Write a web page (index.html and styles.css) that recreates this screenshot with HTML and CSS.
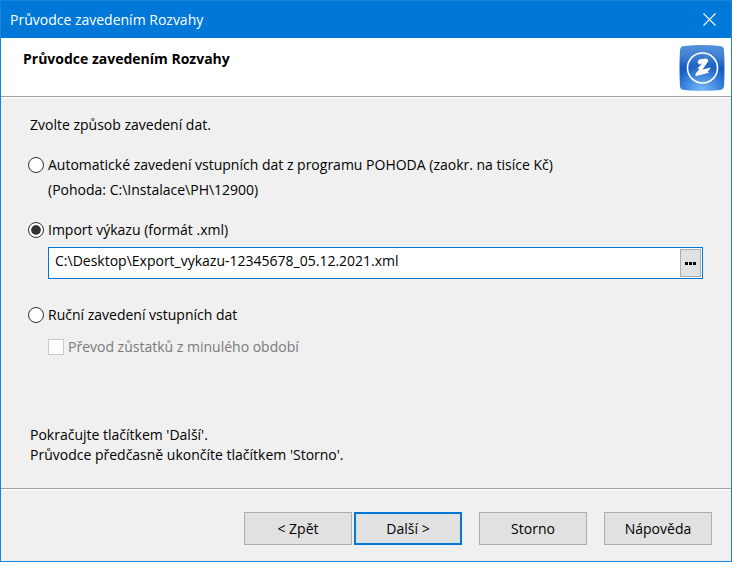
FILE: index.html
```html
<!DOCTYPE html>
<html lang="cs">
<head>
  <meta charset="UTF-8" />
  <meta name="viewport" content="width=device-width, initial-scale=1" />
  <title>Průvodce zavedením Rozvahy</title>
  <link rel="stylesheet" href="styles.css">
</head>
<body>
  <form class="window">
    <div class="titlebar">
      <span>Průvodce zavedením Rozvahy</span>
      <button type="button" class="close" aria-label="Zavřít">
        <svg width="13" height="13" viewBox="0 0 13 13"><path d="M0.5 0.5L12.5 12.5M12.5 0.5L0.5 12.5" stroke="#fff" stroke-width="1.1" /></svg>
      </button>
    </div>

    <header class="header">
      <h1>Průvodce zavedením Rozvahy</h1>
      <svg class="logo" width="46" height="46" viewBox="0 0 46 46">
        <defs>
          <linearGradient id="tile" x1="0" y1="0" x2="0" y2="1">
            <stop offset="0" stop-color="#5590da" />
            <stop offset="0.25" stop-color="#4080d2" />
            <stop offset="0.5" stop-color="#165cc0" />
            <stop offset="0.75" stop-color="#1764cd" />
            <stop offset="1" stop-color="#226fd6" />
          </linearGradient>
          <radialGradient id="glow" cx="0.5" cy="1" r="0.6">
            <stop offset="0" stop-color="#8ccbff" stop-opacity="0.8" />
            <stop offset="1" stop-color="#8ccbff" stop-opacity="0" />
          </radialGradient>
        </defs>
        <path d="M5 1Q23 -1 41 1Q45 1.500 45 5Q46 23 45 41Q44.500 44.500 41 45Q23 46 5 45Q1 44.500 1 41Q0 23 1 5Q1.500 1 5 1Z" fill="url(#tile)" />
        <path d="M5 1Q23 -1 41 1Q45 1.500 45 5Q46 23 45 41Q44.500 44.500 41 45Q23 46 5 45Q1 44.500 1 41Q0 23 1 5Q1.500 1 5 1Z" fill="url(#glow)" />
        <circle cx="23.500" cy="23" r="15" fill="none" stroke="#fff" stroke-width="1.600" />
        <path d="M18.500 17L20 14.500L27 13.500Q29.500 14 29 16.500L23.500 24.500L32 22.500L28.500 27L30.500 27.500L17.500 31Q15.500 30.500 17 28L20.500 24L18.500 23.500L23 18.500L20 19.500Z" fill="#fff" />
      </svg>
    </header>

    <main class="content">
      <p class="intro">Zvolte způsob zavedení dat.</p>

      <div class="option">
        <input type="radio" name="source" id="auto">
        <label for="auto">Automatické zavedení vstupních dat z programu POHODA (zaokr. na tisíce Kč)</label>
      </div>
      <p class="detail">(Pohoda: C:\Instalace\PH\12900)</p>

      <div class="option">
        <input type="radio" name="source" id="import" checked>
        <label for="import">Import výkazu (formát .xml)</label>
      </div>
      <div class="file">
        <input type="text" value="C:\Desktop\Export_vykazu-12345678_05.12.2021.xml" aria-label="Soubor výkazu">
        <button type="button" class="browse" aria-label="Procházet">
          <svg width="11" height="3" viewBox="0 0 11 3"><path d="M0 0h3v3h-3zM4 0h3v3h-3zM8 0h3v3h-3z" /></svg>
        </button>
      </div>

      <div class="option">
        <input type="radio" name="source" id="manual">
        <label for="manual">Ruční zavedení vstupních dat</label>
      </div>
      <div class="option sub">
        <input type="checkbox" id="transfer" disabled>
        <label for="transfer">Převod zůstatků z minulého období</label>
      </div>

      <p class="hint">Pokračujte tlačítkem 'Další'.<br>Průvodce předčasně ukončíte tlačítkem 'Storno'.</p>
    </main>

    <footer class="footer">
      <div class="steps">
        <button type="button" class="btn">&lt; Zpět</button>
        <button type="button" class="btn primary">Další &gt;</button>
      </div>
      <button type="button" class="btn">Storno</button>
      <button type="button" class="btn">Nápověda</button>
    </footer>
  </form>
</body>
</html>
```

FILE: styles.css
```css
* {
  box-sizing: border-box;
}
body {
  margin: 0;
  font-family: "Segoe UI", "Open Sans", "Noto Sans", sans-serif;
  font-size: 14px;
  line-height: 20px;
  color: #000;
}
button,
input {
  font: inherit;
  color: inherit;
}
h1,
p {
  margin: 0;
}
svg {
  display: block;
}
.window {
  display: flex;
  flex-direction: column;
  min-height: 100vh;
  background: #f0f0f0;
  border: 1px solid #1883d7;
}
.titlebar {
  display: flex;
  justify-content: space-between;
  align-items: center;
  height: 37px;
  padding-left: 9px;
  background: #0078d7;
  color: #fff;
}
.close {
  padding: 12px 15px;
  border: none;
  background: none;
}
.header {
  display: flex;
  justify-content: space-between;
  align-items: flex-start;
  padding: 7px 6px 5px 22px;
  background: #fff;
  border-bottom: 1px solid #a0a0a0;
}
.header h1 {
  padding-top: 4px;
  font-size: 14px;
  font-weight: bold;
}
.content {
  flex: 1;
  padding: 17px 28px 23px 27px;
  border-top: 1px solid #fff;
  border-bottom: 1px solid #a0a0a0;
}
.intro {
  margin-bottom: 20px;
  padding-left: 2px;
}
.option {
  display: flex;
  align-items: center;
  gap: 4px;
}
.option input {
  appearance: none;
  flex: none;
  width: 16px;
  height: 16px;
  margin: 0;
  background: #fff;
  border: 1px solid #333;
}
.option input[type="radio"] {
  border-radius: 50%;
}
.option input[type="radio"]:checked {
  background: #333;
  background-clip: content-box;
  padding: 2px;
  box-shadow: inset 0 0 0 2px #fff;
}
.option input:disabled {
  border-color: #ccc;
}
.option input:disabled + label {
  color: #7a7a7a;
}
.detail {
  margin: 5px 0 20px;
  padding-left: 20px;
}
.file {
  display: flex;
  height: 32px;
  margin: 7px 0 26px 20px;
  padding: 1px;
  background: #fff;
  border: 1px solid #0078d7;
}
.file input {
  flex: 1;
  min-width: 0;
  padding: 0 5px 4px;
  border: none;
  outline: none;
  background: none;
}
.browse {
  width: 21px;
  padding: 0 4px;
  border: 1px solid #adadad;
  background: #e1e1e1;
}
.sub {
  margin-top: 12px;
  padding-left: 20px;
}
.hint {
  margin-top: 68px;
  padding-left: 2px;
}
.footer {
  display: flex;
  justify-content: flex-end;
  gap: 17px;
  padding: 22px 19px 16px;
  border-top: 1px solid #fff;
}
.steps {
  display: flex;
  gap: 2px;
}
.btn {
  width: 108px;
  height: 33px;
  padding: 0;
  background: #e1e1e1;
  border: 1px solid #adadad;
}
.btn.primary {
  border: 2px solid #0078d7;
}
```
